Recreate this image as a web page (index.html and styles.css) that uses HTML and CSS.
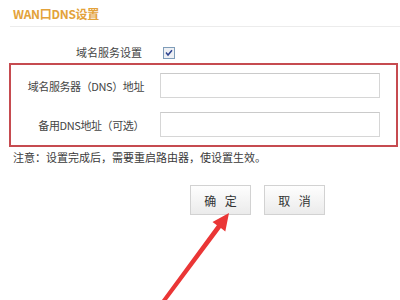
FILE: index.html
```html
<!DOCTYPE html>
<html lang="zh-CN">
<head>
<meta charset="utf-8">
<title>WAN口DNS设置</title>
<link rel="stylesheet" href="styles.css">
</head>
<body>
<div class="page">
  <h1 class="title">WAN口DNS设置</h1>
  <div class="check-row">
    <span class="check-label">域名服务设置</span>
    <span class="checkbox">
      <svg width="12" height="12" viewBox="0 0 12 12"><rect x="0.5" y="0.5" width="11" height="11" fill="#eef0f4" stroke="#7f9db9"/><path d="M3 5.6 L5 8 L9 3.2" fill="none" stroke="#2f4490" stroke-width="1.5"/></svg>
    </span>
  </div>
  <div class="dns-box">
    <label class="field-label">域名服务器（DNS）地址</label>
    <span class="field-input"></span>
    <label class="field-label">备用DNS地址（可选）</label>
    <span class="field-input"></span>
  </div>
  <p class="note">注意：设置完成后，需要重启路由器，使设置生效。</p>
  <div class="buttons">
    <button class="btn">确 定</button>
    <button class="btn">取 消</button>
  </div>
  <svg class="arrow" width="400" height="300" viewBox="0 0 400 300">
    <polygon points="229,213 225.3,231.4 220.9,228.1 164.6,303.2 161.4,300.8 216.9,225.2 212.5,221.9" fill="#ea3636"/>
  </svg>
</div>
</body>
</html>
```
FILE: styles.css
```css
html, body {
  margin: 0;
  padding: 0;
  background: #ffffff;
}
body {
  font-family: "Noto Sans CJK SC", "Noto Sans", sans-serif;
  font-size: 11px;
  color: #444444;
}
.page {
  position: relative;
  width: 400px;
  height: 300px;
  overflow: hidden;
}
.title {
  margin: 0 0 0 10px;
  padding: 1px 0 0 3px;
  height: 25px;
  line-height: 25px;
  font-size: 12px;
  font-weight: bold;
  letter-spacing: -0.3px;
  color: #e3a23a;
  border-bottom: 1px solid #ececec;
}
.check-row {
  display: flex;
  align-items: center;
  margin-top: 17px;
  height: 16px;
}
.check-label {
  width: 142px;
  text-align: right;
}
.checkbox {
  display: flex;
  margin-left: 21px;
  margin-top: 2px;
}
.dns-box {
  box-sizing: border-box;
  width: 389px;
  margin: 3px 0 0 9px;
  border: 2px solid #c64b50;
  padding: 8px 16px 8px 0;
  display: grid;
  grid-template-columns: 133px 220px;
  column-gap: 16px;
  row-gap: 14px;
  align-items: center;
}
.field-label {
  text-align: right;
  letter-spacing: -0.4px;
}
.field-input {
  display: block;
  box-sizing: border-box;
  height: 25px;
  border: 1px solid #d6d6d6;
  border-top-color: #cacaca;
  background: #ffffff;
}
.note {
  margin: 3px 0 0 0;
  padding-left: 13px;
  line-height: 14px;
  color: #3a3a3a;
}
.buttons {
  display: flex;
  gap: 13px;
  margin-top: 21px;
  padding-left: 190px;
}
.btn {
  box-sizing: border-box;
  width: 61px;
  height: 30px;
  padding: 0;
  border: 1px solid #d2d2d2;
  background: linear-gradient(#fefefe, #ebebeb);
  font-family: "Noto Sans CJK SC", sans-serif;
  font-size: 12px;
  word-spacing: 6px;
  color: #333333;
}
.arrow {
  position: absolute;
  left: 0;
  top: 0;
  pointer-events: none;
}
```
